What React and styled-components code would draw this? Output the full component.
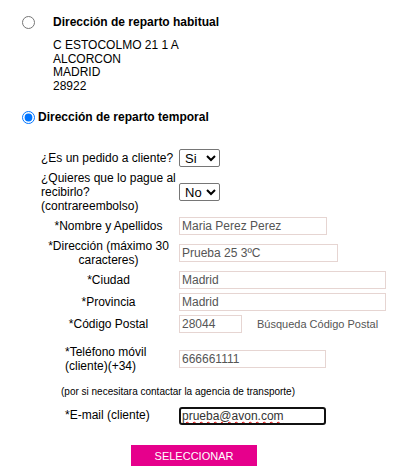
import React from 'react'
import styled, { createGlobalStyle } from 'styled-components'

const GlobalStyle = createGlobalStyle`
  body {
    margin: 0;
    background: #fff;
    font-family: 'Liberation Sans', Arial, sans-serif;
    color: #000;
  }
`;

const Page = styled.div`
  width: 402px;
  padding-top: 13px;
  box-sizing: border-box;
`;

const Habitual = styled.div`
  display: grid;
  grid-template-columns: 31px auto;
  padding-left: 22px;
  align-items: start;
`;

const Radio = styled.input.attrs({ type: 'radio' })`
  margin: 0;
  width: 13px;
  height: 13px;
  margin-top: ${p => p.$top || 0}px;
`;

const OptionTitle = styled.span`
  font-size: 12px;
  font-weight: bold;
  line-height: 14px;
  display: block;
  padding-top: 2px;
`;

const Address = styled.div`
  font-size: 12px;
  line-height: 13.5px;
  margin-top: 10px;
`;

const Temporal = styled.label`
  display: flex;
  align-items: center;
  gap: 3px;
  padding-left: 22px;
  margin-top: 17px;

  ${OptionTitle} {
    padding-top: 0;
  }
`;

const FormGrid = styled.div`
  display: grid;
  grid-template-columns: 135px auto;
  column-gap: 3px;
  margin-left: 41px;
  margin-top: ${p => p.$top}px;
  align-items: ${p => p.$align || 'center'};
  font-size: 12px;
`;

const Label = styled.div`
  font-size: ${p => p.$size || 12}px;
  line-height: 14px;
  padding: 2px 0;
  white-space: nowrap;
  text-align: ${p => p.$align || 'center'};
  padding-left: ${p => p.$indent || 0}px;
  margin-top: ${p => p.$top || 0}px;
`;

const Field = styled.div`
  display: flex;
  align-items: center;
  padding: ${p => (p.$flush ? 0 : 2)}px 0;
  margin-top: ${p => p.$top || 0}px;
`;

const Select = styled.select`
  width: 41px;
  height: 18px;
  margin: 0;
  padding: 0 0 0 1px;
  font-family: 'Liberation Sans', Arial, sans-serif;
  font-size: 13px;
  color: #000;
  border: 1px solid #767676;
  border-radius: 2px;
  background: #fff;
`;

const TextInput = styled.input`
  width: ${p => p.$w}px;
  height: 18px;
  box-sizing: border-box;
  margin: 0;
  padding: 0 2px;
  font-family: 'Liberation Sans', Arial, sans-serif;
  font-size: 12px;
  color: #555;
  border: 1px solid #e6d5d2;
  background: #fff;
  outline: none;
`;

const FocusedInput = styled(TextInput)`
  border: 2px solid #111;
  border-radius: 3px;
  padding: 0 1px;
  color: #333;
  text-decoration: underline wavy #e00000;
  text-decoration-thickness: 1px;
`;

const Hint = styled.span`
  font-size: 11px;
  color: #555;
  margin-left: 15px;
`;

const Note = styled.div`
  grid-column: 1 / -1;
  font-size: 10px;
  line-height: 12px;
  padding-left: 20px;
  margin-top: 11px;
`;

const Submit = styled.button`
  display: block;
  width: 126px;
  height: 21px;
  margin: 20px 0 0 131px;
  padding: 0;
  border: none;
  background: #e6008c;
  color: #fff;
  font-family: 'Liberation Sans', Arial, sans-serif;
  font-size: 11px;
`;

export default function App() {
  return (
    <Page>
      <GlobalStyle />
      <Habitual>
        <Radio name="dir" $top={3} />
        <div>
          <OptionTitle>Dirección de reparto habitual</OptionTitle>
          <Address>
            C ESTOCOLMO 21 1 A<br />
            ALCORCON<br />
            MADRID<br />
            28922
          </Address>
        </div>
      </Habitual>

      <Temporal>
        <Radio name="dir" defaultChecked />
        <OptionTitle>Dirección de reparto temporal</OptionTitle>
      </Temporal>

      <FormGrid $top={23}>
        <Label $align="left">¿Es un pedido a cliente?</Label>
        <Field>
          <Select defaultValue="Si">
            <option>Si</option>
            <option>No</option>
          </Select>
        </Field>

        <Label $align="left">¿Quieres que lo pague al<br />recibirlo?<br />(contrareembolso)</Label>
        <Field>
          <Select defaultValue="No">
            <option>Si</option>
            <option>No</option>
          </Select>
        </Field>

        <Label>*Nombre y Apellidos</Label>
        <Field><TextInput $w={148} defaultValue="Maria Perez Perez" /></Field>

        <Label>*Dirección (máximo 30<br />caracteres)</Label>
        <Field><TextInput $w={159} defaultValue="Prueba 25 3ºC" /></Field>

        <Label>*Ciudad</Label>
        <Field><TextInput $w={207} defaultValue="Madrid" /></Field>

        <Label>*Provincia</Label>
        <Field><TextInput $w={207} defaultValue="Madrid" /></Field>

        <Label>*Código Postal</Label>
        <Field>
          <TextInput $w={63} defaultValue="28044" />
          <Hint>Búsqueda Código Postal</Hint>
        </Field>
      </FormGrid>

      <FormGrid $top={8} $align="start">
        <Label $align="left" $indent={24}>*Teléfono móvil<br />(cliente)(+34)</Label>
        <Field $top={5}><TextInput $w={147} defaultValue="666661111" /></Field>

        <Note>(por si necesitara contactar la agencia de transporte)</Note>

        <Label $align="left" $indent={24} $top={8}>*E-mail (cliente)</Label>
        <Field $top={9} $flush>
          <FocusedInput $w={147} defaultValue="prueba@avon.com" />
        </Field>
      </FormGrid>

      <Submit>SELECCIONAR</Submit>
    </Page>
  );
}
